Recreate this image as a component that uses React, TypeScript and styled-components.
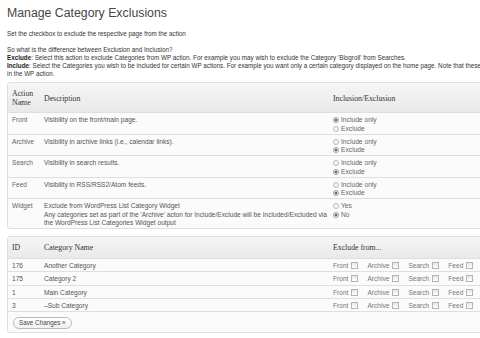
import { createGlobalStyle, styled } from "styled-components";

const GlobalStyle = createGlobalStyle`
  html, body {
    margin: 0;
    padding: 0;
    background: #ffffff;
    overflow: hidden;
  }
  body {
    font-family: "Liberation Sans", Arial, sans-serif;
    color: #333;
  }
`;

type ActionRow = {
  name: string;
  desc: string[];
  options: string[];
  checked: number;
};

const actions: ActionRow[] = [
  { name: "Front", desc: ["Visibility on the front/main page."], options: ["Include only", "Exclude"], checked: 0 },
  { name: "Archive", desc: ["Visibility in archive links (i.e., calendar links)."], options: ["Include only", "Exclude"], checked: 1 },
  { name: "Search", desc: ["Visibility in search results."], options: ["Include only", "Exclude"], checked: 1 },
  { name: "Feed", desc: ["Visibility in RSS/RSS2/Atom feeds."], options: ["Include only", "Exclude"], checked: 1 },
  {
    name: "Widget",
    desc: [
      "Exclude from WordPress List Category Widget",
      "Any categories set as part of the 'Archive' acton for Include/Exclude will be Included/Excluded via",
      "the WordPress List Categories Widget output",
    ],
    options: ["Yes", "No"],
    checked: 1,
  },
];

const categories = [
  { id: "176", name: "Another Category" },
  { id: "175", name: "Category 2" },
  { id: "1", name: "Main Category" },
  { id: "3", name: "–Sub Category" },
];

const places = ["Front", "Archive", "Search", "Feed"];

const App = () => {
  return (
    <Page>
      <GlobalStyle />
      <Title>Manage Category Exclusions</Title>
      <Intro>Set the checkbox to exclude the respective page from the action</Intro>
      <Help>
        So what is the difference between Exclusion and Inclusion?
        <br />
        <b>Exclude</b>: Select this action to exclude Categories from WP action. For example you may wish to
        exclude the Category 'Blogroll' from Searches.
        <br />
        <b>Include</b>: Select the Categories you wish to be included for certain WP actions. For example you
        want only a certain category displayed on the home page. Note that these apply to categories
        <br />
        in the WP action.
      </Help>

      <Table>
        <colgroup>
          <col style={{ width: 32 }} />
          <col style={{ width: 289 }} />
          <col />
        </colgroup>
        <thead>
          <tr>
            <Th>
              Action
              <br />
              Name
            </Th>
            <Th>Description</Th>
            <Th>Inclusion/Exclusion</Th>
          </tr>
        </thead>
        <tbody>
          {actions.map((a) => (
            <tr key={a.name}>
              <NameCell>{a.name}</NameCell>
              <Td>
                {a.desc.map((line) => (
                  <div key={line}>{line}</div>
                ))}
              </Td>
              <Td>
                {a.options.map((opt, i) => (
                  <RadioLabel key={opt}>
                    <Radio type="radio" name={`action-${a.name}`} defaultChecked={i === a.checked} />
                    {opt}
                  </RadioLabel>
                ))}
              </Td>
            </tr>
          ))}
        </tbody>
      </Table>

      <CatTable>
        <colgroup>
          <col style={{ width: 32 }} />
          <col style={{ width: 289 }} />
          <col />
        </colgroup>
        <thead>
          <tr>
            <CatTh>ID</CatTh>
            <CatTh>Category Name</CatTh>
            <CatTh>Exclude from...</CatTh>
          </tr>
        </thead>
        <tbody>
          {categories.map((c) => (
            <tr key={c.id}>
              <CatCell>{c.id}</CatCell>
              <CatCell>{c.name}</CatCell>
              <CatCell>
                <Checks>
                  {places.map((p) => (
                    <CheckLabel key={p}>
                      {p}
                      <Check type="checkbox" />
                    </CheckLabel>
                  ))}
                </Checks>
              </CatCell>
            </tr>
          ))}
        </tbody>
        <tfoot>
          <tr>
            <FootCell colSpan={3}>
              <SaveButton type="button">Save Changes »</SaveButton>
            </FootCell>
          </tr>
        </tfoot>
      </CatTable>
    </Page>
  );
};

export default App;

const Page = styled.div`
  width: 560px;
  padding: 4px 0 0 7px;
`;

const Title = styled.h2`
  margin: 0;
  font-size: 12.3px;
  font-weight: normal;
  line-height: 18px;
  color: #464646;
`;

const Intro = styled.p`
  margin: 8px 0 0;
  font-size: 6.3px;
  line-height: 8px;
  color: #333;
`;

const Help = styled.p`
  margin: 8px 0 0;
  font-size: 6.3px;
  line-height: 8px;
  color: #333;
  white-space: nowrap;

  b {
    color: #222;
  }
`;

const Table = styled.table`
  margin-top: 4px;
  width: 540px;
  table-layout: fixed;
  border-collapse: separate;
  border-spacing: 0;
  border: 1px solid #dfdfdf;
  border-radius: 3px;
  overflow: hidden;
  background: #fbfbfb;
  font-size: 6.6px;
  color: #555;

  tbody td {
    border-top: 1px solid #dfdfdf;
  }
`;

const CatTable = styled(Table)`
  margin-top: 7px;
`;

const Th = styled.th`
  padding: 6px 4px 5px;
  text-align: left;
  vertical-align: middle;
  font-family: "Liberation Serif", Georgia, serif;
  font-weight: normal;
  font-size: 7.8px;
  line-height: 9px;
  color: #333;
  white-space: nowrap;
  background: linear-gradient(#f6f6f6, #e9e9e9);
`;

const CatTh = styled(Th)`
  padding: 6px 4px 6px;
`;

const Td = styled.td`
  padding: 3px 4px 0.5px;
  vertical-align: top;
  line-height: 8.5px;
  color: #555;
  white-space: nowrap;
`;

const NameCell = styled(Td)`
  color: #666;
`;

const RadioLabel = styled.label`
  display: flex;
  align-items: center;
  gap: 2px;
  height: 8.5px;
  font-size: 6.7px;
  color: #666;
`;

const Radio = styled.input`
  appearance: none;
  margin: 0;
  width: 6px;
  height: 6px;
  border-radius: 50%;
  border: 1px solid #bcbcbc;
  background: radial-gradient(circle, #ffffff 0, #e9e9e9 100%);
  box-sizing: border-box;

  &:checked {
    background: radial-gradient(circle, #1f5f9e 0, #3a7cc0 45%, #dcdcdc 55%, #f2f2f2 100%);
    border-color: #9aa4ae;
  }
`;

const CatCell = styled.td`
  padding: 2px 4px 1.3px;
  line-height: 9px;
  vertical-align: middle;
  color: #555;
  white-space: nowrap;
`;

const Checks = styled.div`
  display: flex;
  gap: 9px;
`;

const CheckLabel = styled.label`
  display: inline-flex;
  align-items: center;
  gap: 3px;
  color: #777;
`;

const Check = styled.input`
  appearance: none;
  margin: 0;
  width: 7px;
  height: 7px;
  border: 1px solid #b4b4b4;
  background: linear-gradient(#e6e6e6, #ffffff);
  box-sizing: border-box;
`;

const FootCell = styled.td`
  border-top: 1px solid #dfdfdf;
  padding: 5px 5px 3px;
`;

const SaveButton = styled.button`
  font-family: "Liberation Sans", Arial, sans-serif;
  font-size: 6.3px;
  line-height: 10px;
  height: 12px;
  padding: 0 5px;
  color: #464646;
  border: 1px solid #bbbbbb;
  border-radius: 6px;
  background: linear-gradient(#ffffff, #f0f0f0);
`;
